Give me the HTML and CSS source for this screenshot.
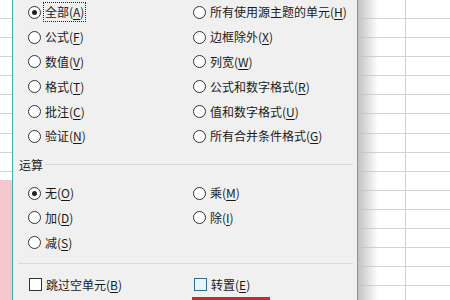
FILE: index.html
```html
<!DOCTYPE html>
<html>
<head>
    <title>选择性粘贴</title>
    <link rel="stylesheet" href="styles.css">
</head>
<body>

    <div class="screen">
        <div class="sheet sheet-left"></div>

        <div class="dialog">
            <div class="grid">
                <label class="opt"><span class="radio checked"></span><span class="focus">全部(<u>A</u>)</span></label>
                <label class="opt"><span class="radio"></span>所有使用源主题的单元(<u>H</u>)</label>
                <label class="opt"><span class="radio"></span>公式(<u>F</u>)</label>
                <label class="opt"><span class="radio"></span>边框除外(<u>X</u>)</label>
                <label class="opt"><span class="radio"></span>数值(<u>V</u>)</label>
                <label class="opt"><span class="radio"></span>列宽(<u>W</u>)</label>
                <label class="opt"><span class="radio"></span>格式(<u>T</u>)</label>
                <label class="opt"><span class="radio"></span>公式和数字格式(<u>R</u>)</label>
                <label class="opt"><span class="radio"></span>批注(<u>C</u>)</label>
                <label class="opt"><span class="radio"></span>值和数字格式(<u>U</u>)</label>
                <label class="opt"><span class="radio"></span>验证(<u>N</u>)</label>
                <label class="opt"><span class="radio"></span>所有合并条件格式(<u>G</u>)</label>
            </div>

            <div class="group-head"><span>运算</span><div class="line"></div></div>

            <div class="grid ops">
                <label class="opt"><span class="radio checked"></span>无(<u>O</u>)</label>
                <label class="opt"><span class="radio"></span>乘(<u>M</u>)</label>
                <label class="opt"><span class="radio"></span>加(<u>D</u>)</label>
                <label class="opt"><span class="radio"></span>除(<u>I</u>)</label>
                <label class="opt"><span class="radio"></span>减(<u>S</u>)</label>
            </div>

            <div class="sep"></div>

            <div class="grid checks">
                <label class="opt"><span class="check"></span>跳过空单元(<u>B</u>)</label>
                <label class="opt"><span class="check hover"></span>转置(<u>E</u>)</label>
            </div>

            <div class="button-row"><div class="marked"></div></div>
        </div>

        <div class="sheet sheet-right"></div>
    </div>

</body>
</html>
```

FILE: styles.css
```css
body {
    margin: 0;
    font-family: "Noto Sans CJK SC", "Noto Sans", sans-serif;
    font-size: 12px;
    color: #1a1a1a;
    overflow: hidden;
}
.screen {
    display: flex;
    height: 300px;
    overflow: hidden;
}
.sheet {
    background-color: #fff;
    background-image: repeating-linear-gradient(to bottom, transparent 0, transparent 18.08px, #d4d4d4 18.08px, #d4d4d4 19.08px);
}
.sheet-left {
    width: 12px;
    background-image:
        linear-gradient(to bottom, transparent 180px, #f4c7cd 180px),
        repeating-linear-gradient(to bottom, transparent 0, transparent 18.08px, #d4d4d4 18.08px, #d4d4d4 19.08px);
}
.sheet-right {
    flex: 1;
    background-image:
        linear-gradient(to right, #c2c2c2, rgba(255, 255, 255, 0) 20px),
        linear-gradient(to right, transparent 47px, #d0d0d0 47px, #d0d0d0 48px, transparent 48px),
        repeating-linear-gradient(to bottom, transparent 0, transparent 18.08px, #d4d4d4 18.08px, #d4d4d4 19.08px);
}
.dialog {
    width: 344px;
    background: #f0f0f0;
    border-left: 1px solid #3cb4ad;
    border-right: 1px solid #3cb4ad;
}
.grid {
    display: grid;
    grid-template-columns: 165px 1fr;
    grid-auto-rows: 24.8px;
    padding-left: 15px;
}
.opt {
    display: flex;
    align-items: center;
    white-space: nowrap;
    line-height: 16px;
}
.opt u {
    text-decoration-thickness: 1px;
    text-underline-offset: 2px;
}
.radio {
    width: 11px;
    height: 11px;
    border: 1px solid #333;
    border-radius: 50%;
    background: #fff;
    margin-right: 4px;
    position: relative;
    flex: none;
}
.radio.checked::after {
    content: "";
    position: absolute;
    left: 3px;
    top: 3px;
    width: 5px;
    height: 5px;
    border-radius: 50%;
    background: #222;
}
.focus {
    outline: 1px dotted #222;
    outline-offset: 1px;
    margin-left: 0;
}
.check {
    width: 11px;
    height: 11px;
    border: 1px solid #333;
    background: #fff;
    margin-left: 1px;
    margin-right: 4px;
    flex: none;
}
.check.hover {
    border-color: #2f6f8f;
    background: #e9f5fc;
}
.group-head {
    display: flex;
    align-items: center;
    margin-top: 8px;
    padding-left: 6px;
    padding-right: 4px;
    height: 16px;
    line-height: 16px;
}
.group-head .line {
    flex: 1;
    height: 1px;
    background: #dadada;
    margin-left: 2px;
}
.ops {
    margin-top: 8px;
}
.sep {
    height: 1px;
    background: #dadada;
    margin: 8px 4px 0 5px;
}
.checks {
    margin-top: 8px;
}
.button-row {
    padding-left: 179px;
}
.marked {
    width: 78px;
    height: 10px;
    background: #c8282e;
}
```
